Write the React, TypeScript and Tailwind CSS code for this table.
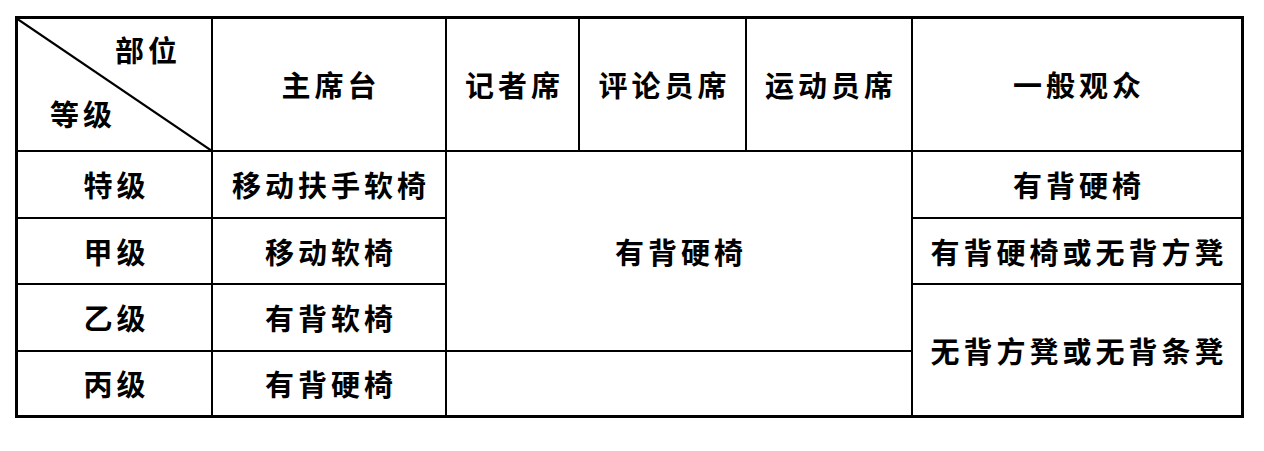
import React from "react";

const font = { fontFamily: '"Noto Sans CJK SC", "Noto Sans", sans-serif' };

function T({ children }: { children: React.ReactNode }) {
  return <span className="tracking-[4px] mr-[-4px] whitespace-nowrap">{children}</span>;
}

function Cell({ children, className = "" }: { children?: React.ReactNode; className?: string }) {
  return (
    <div className={`bg-white flex items-center justify-center ${className}`}>
      {children ? <T>{children}</T> : null}
    </div>
  );
}

export default function App() {
  return (
    <div className="w-[1264px] h-[451px] bg-white pt-[16px] pl-[15px]" style={font}>
      <div className="grid grid-cols-[193px_232px_131px_165px_164px_328px] grid-rows-[131px_65px_64px_65px_63px] gap-[2px] bg-black p-[3px] w-[1229px] text-[29px] leading-none font-bold text-black">
        {/* header */}
        <div className="bg-white relative flex flex-col justify-between pt-[16px] pb-[22px]">
          <svg className="absolute inset-0" width="193" height="131" viewBox="0 0 193 131">
            <line x1="-2" y1="-1" x2="194" y2="132" stroke="black" strokeWidth="2.2" />
          </svg>
          <div className="self-end pr-[34px]">
            <T>部位</T>
          </div>
          <div className="self-start pl-[32px]">
            <T>等级</T>
          </div>
        </div>
        <Cell>主席台</Cell>
        <Cell>记者席</Cell>
        <Cell>评论员席</Cell>
        <Cell>运动员席</Cell>
        <Cell>一般观众</Cell>

        {/* 特级 */}
        <Cell>特级</Cell>
        <Cell>移动扶手软椅</Cell>
        <Cell className="col-span-3 row-span-3">有背硬椅</Cell>
        <Cell>有背硬椅</Cell>

        {/* 甲级 */}
        <Cell>甲级</Cell>
        <Cell>移动软椅</Cell>
        <Cell>有背硬椅或无背方凳</Cell>

        {/* 乙级 */}
        <Cell>乙级</Cell>
        <Cell>有背软椅</Cell>
        <Cell className="row-span-2">无背方凳或无背条凳</Cell>

        {/* 丙级 */}
        <Cell>丙级</Cell>
        <Cell>有背硬椅</Cell>
        <Cell className="col-span-3" />
      </div>
    </div>
  );
}
